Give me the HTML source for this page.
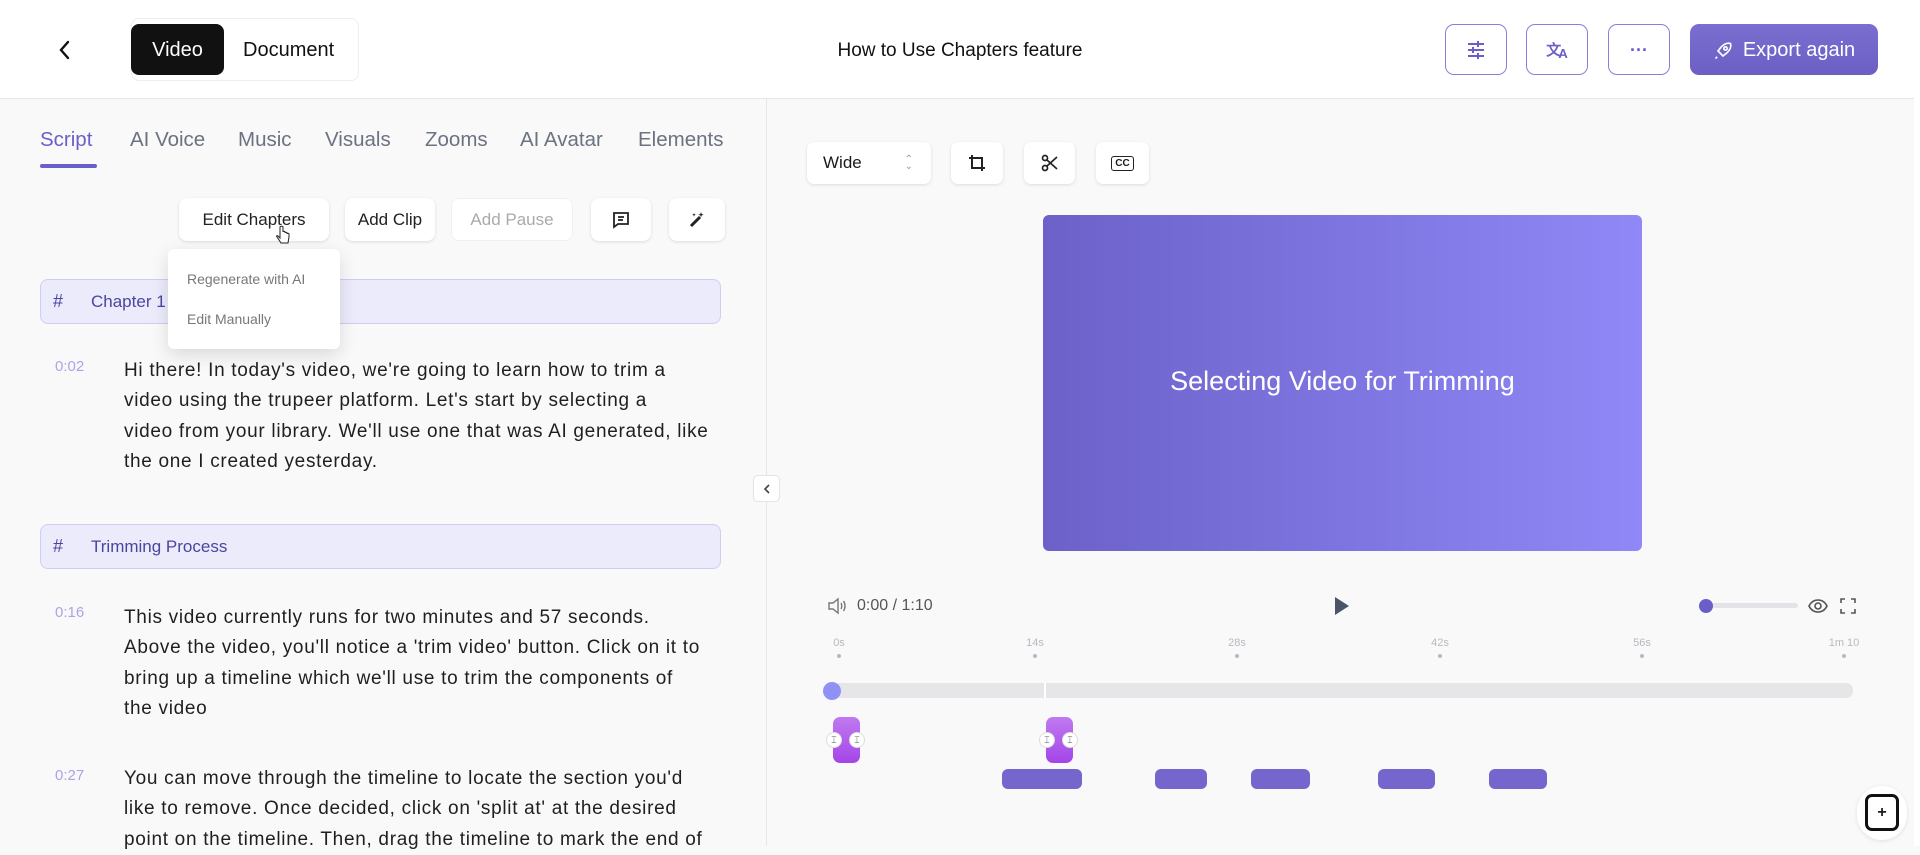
<!DOCTYPE html>
<html><head><meta charset="utf-8"><style>
*{box-sizing:border-box;margin:0;padding:0}
body{width:1920px;height:846px;overflow:hidden;background:#f9f9fa;font-family:"Liberation Sans",sans-serif;color:#1a1a1a;position:relative}
.a{position:absolute}
.hdr{left:0;top:0;width:1920px;height:99px;background:#fff;border-bottom:1px solid #e6e6ea}
.btn{position:absolute;border:1px solid #8a7fd8;border-radius:9px;background:#fff;display:flex;align-items:center;justify-content:center}
.tab{position:absolute;top:128px;font-size:20.5px;color:#6b7280}
.tb{position:absolute;top:198px;height:43px;background:#fff;border-radius:8px;box-shadow:0 1px 3px rgba(0,0,0,.12);display:flex;align-items:center;justify-content:center;font-size:17px;color:#222}
.chap{position:absolute;left:40px;width:681px;height:45px;background:#ebebfb;border:1px solid #cfcdf4;border-radius:8px;font-size:17px;color:#4b45a0;display:flex;align-items:center}
.chap b{font-weight:normal;margin:0 0 0 12px;width:38px;font-size:18px}
.ts{position:absolute;left:55px;font-size:15px;color:#a9a5e6}
.p{position:absolute;left:124px;white-space:nowrap;font-size:19px;letter-spacing:0.7px;line-height:30.3px;color:#1f1f1f}
.ib{position:absolute;top:142px;height:42px;background:#fff;border-radius:7px;box-shadow:0 1px 3px rgba(0,0,0,.12);display:flex;align-items:center;justify-content:center}
.tk{position:absolute;top:637px;font-size:11px;color:#b8b8c0;transform:translateX(-50%)}
.dot{position:absolute;top:654px;width:4px;height:4px;border-radius:2px;background:#b8b8c0}
.bar{position:absolute;top:769px;height:20px;border-radius:6px;background:#7466cc}
.clip{position:absolute;top:717px;width:27px;height:46px;border-radius:7px;background:linear-gradient(#c07af0,#a445e8)}
.h{position:absolute;top:732px;width:16px;height:16px;border-radius:8px;background:#fff;border:1px solid #ddd;font-size:9px;text-align:center;line-height:14px;color:#555}
</style></head><body>
<div class="a hdr"></div>
<svg class="a" style="left:58px;top:40px" width="14" height="20" viewBox="0 0 14 20"><path d="M10 2 L3 10 L10 18" stroke="#111" stroke-width="2.4" fill="none" stroke-linecap="round"/></svg>
<div class="a" style="left:131px;top:18px;width:228px;height:63px;border:1px solid #eee;border-radius:8px;background:#fff"></div>
<div class="a" style="left:131px;top:24px;width:93px;height:51px;background:#111;border-radius:8px;color:#fff;font-size:20px;display:flex;align-items:center;justify-content:center;padding-top:2px">Video</div>
<div class="a" style="left:243px;top:39px;font-size:20px;color:#111">Document</div>
<div class="a" style="left:760px;width:400px;top:40px;text-align:center;font-size:19px;color:#111">How to Use Chapters feature</div>
<div class="btn" style="left:1445px;top:24px;width:62px;height:51px"><svg width="20" height="18" viewBox="0 0 20 18" stroke="#6a5fc8" stroke-width="2"><path d="M2 3h16M2 9h16M2 15h16"/><path d="M12 0v6M7 6v6M12 12v6"/></svg></div>
<div class="btn" style="left:1526px;top:24px;width:62px;height:51px;color:#6a5fc8;font-size:15px;font-weight:bold">文<span style="font-size:13px;margin-left:-3px;margin-top:8px">A</span></div>
<div class="btn" style="left:1608px;top:24px;width:62px;height:51px;color:#6a5fc8;font-size:18px;font-weight:bold;letter-spacing:1px;padding-bottom:8px">...</div>
<div class="a" style="left:1690px;top:24px;width:188px;height:51px;border-radius:9px;background:linear-gradient(#7a6fd0,#6b5fc4);color:#fff;font-size:20px;display:flex;align-items:center;justify-content:center;gap:10px;padding-top:2px"><svg width="20" height="20" viewBox="0 0 24 24" fill="none" stroke="#fff" stroke-width="2"><path d="M5 19l-2 2M9 15l-3-3 4-5c4-4 8-5 11-4 1 3 0 7-4 11l-5 4z"/><circle cx="15" cy="9" r="2"/></svg>Export again</div>
<div class="a" style="left:1914px;top:0;width:6px;height:846px;background:#fff"></div>
<div class="a" style="left:766px;top:99px;width:1px;height:747px;background:#e6e6ea"></div>

<div class="tab" style="left:40px;color:#6a5fc8">Script</div>
<div class="a" style="left:40px;top:164px;width:57px;height:4px;border-radius:2px;background:#6a5fc8"></div>
<div class="tab" style="left:130px">AI Voice</div>
<div class="tab" style="left:238px">Music</div>
<div class="tab" style="left:325px">Visuals</div>
<div class="tab" style="left:425px">Zooms</div>
<div class="tab" style="left:520px">AI Avatar</div>
<div class="tab" style="left:638px">Elements</div>

<div class="tb" style="left:179px;width:150px">Edit Chapters</div>
<div class="tb" style="left:345px;width:90px">Add Clip</div>
<div class="tb" style="left:451px;width:122px;color:#aaa;box-shadow:none;border:1px solid #f0f0f0">Add Pause</div>
<div class="tb" style="left:591px;width:60px"><svg width="18" height="18" viewBox="0 0 18 18" fill="none" stroke="#222" stroke-width="1.8"><path d="M2 2h14v11H6l-4 3z"/><path d="M6 6h6M6 9h5"/></svg></div>
<div class="tb" style="left:669px;width:56px"><svg width="18" height="18" viewBox="0 0 18 18"><path d="M3 15L12 6" stroke="#222" stroke-width="3"/><path d="M13 1l.7 2 2 .7-2 .7-.7 2-.7-2-2-.7 2-.7zM6 2l.5 1.3 1.3.5-1.3.5L6 5.6l-.5-1.3-1.3-.5 1.3-.5z" fill="#222"/></svg></div>

<div class="chap" style="top:279px"><b>#</b>Chapter 1</div>
<div class="a" style="left:168px;top:249px;width:172px;height:100px;background:#fff;border-radius:6px;box-shadow:0 6px 18px rgba(0,0,0,.13)"></div>
<div class="a" style="left:187px;top:271px;font-size:14px;color:#777">Regenerate with AI</div>
<div class="a" style="left:187px;top:311px;font-size:14px;color:#777">Edit Manually</div>
<svg class="a" style="left:275px;top:225px" width="16" height="22" viewBox="0 0 16 22"><path d="M5 2v11l-2-2c-1-1-2 0-1 1l4 6h7l1-6V9c0-1-2-1-2 0V8c0-1-2-1-2 0V7c0-1-2-1-2 0V2c0-1-3-1-3 0z" fill="#fff" stroke="#222" stroke-width="1"/></svg>

<div class="ts" style="top:358px">0:02</div>
<div class="p" style="top:356px">Hi there! In today's video, we're going to learn how to trim a<br>video using the trupeer platform. Let's start by selecting a<br>video from your library. We'll use one that was AI generated, like<br>the one I created yesterday.</div>
<div class="chap" style="top:524px"><b>#</b>Trimming Process</div>
<div class="ts" style="top:604px">0:16</div>
<div class="p" style="top:603px">This video currently runs for two minutes and 57 seconds.<br>Above the video, you'll notice a 'trim video' button. Click on it to<br>bring up a timeline which we'll use to trim the components of<br>the video</div>
<div class="ts" style="top:767px">0:27</div>
<div class="p" style="top:764px">You can move through the timeline to locate the section you'd<br>like to remove. Once decided, click on 'split at' at the desired<br>point on the timeline. Then, drag the timeline to mark the end of</div>

<div class="a" style="left:753px;top:475px;width:27px;height:27px;background:#fff;border:1px solid #e3e3e8;border-radius:5px;display:flex;align-items:center;justify-content:center"><svg width="8" height="10" viewBox="0 0 8 10"><path d="M6 1L2 5l4 4" stroke="#444" stroke-width="1.6" fill="none"/></svg></div>

<div class="ib" style="left:807px;width:124px;justify-content:flex-start;padding-left:16px;font-size:17px">Wide<span style="position:absolute;right:18px;font-size:10px;color:#999;line-height:7px">⌃<br>⌄</span></div>
<div class="ib" style="left:951px;width:52px"><svg width="18" height="18" viewBox="0 0 18 18" fill="none" stroke="#222" stroke-width="2"><path d="M4 1v13h13M1 4h13v13"/></svg></div>
<div class="ib" style="left:1024px;width:51px"><svg width="18" height="18" viewBox="0 0 18 18" fill="none" stroke="#222" stroke-width="1.7"><circle cx="4" cy="4" r="2.5"/><circle cx="4" cy="14" r="2.5"/><path d="M6 6l10 9M6 12L16 3"/></svg></div>
<div class="ib" style="left:1096px;width:53px"><div style="border:1.6px solid #222;border-radius:3px;font-size:10px;font-weight:bold;padding:1px 3px">CC</div></div>

<div class="a" style="left:1043px;top:215px;width:599px;height:336px;border-radius:6px;background:linear-gradient(90deg,#6c61c9,#8f88f6);color:#fff;font-size:27px;display:flex;align-items:center;justify-content:center;padding-bottom:4px">Selecting Video for Trimming</div>

<svg class="a" style="left:827px;top:597px" width="20" height="18" viewBox="0 0 20 18" fill="none" stroke="#777" stroke-width="1.4"><path d="M2 6h4l5-4v14l-5-4H2z"/><path d="M14 6c1 1.5 1 4.5 0 6M16.5 4c2 3 2 7 0 10"/></svg>
<div class="a" style="left:857px;top:597px;font-size:16px;color:#555">0:00 / 1:10</div>
<svg class="a" style="left:1334px;top:596px" width="16" height="20" viewBox="0 0 16 20"><path d="M1 1l14 9-14 9z" fill="#4a5568"/></svg>
<div class="a" style="left:1705px;top:603px;width:93px;height:5px;border-radius:3px;background:#e4e4e8"></div>
<div class="a" style="left:1699px;top:599px;width:14px;height:14px;border-radius:7px;background:#6a5fc8"></div>
<svg class="a" style="left:1808px;top:597px" width="20" height="18" viewBox="0 0 20 18" fill="none" stroke="#555" stroke-width="1.6"><path d="M1 9c4-8 14-8 18 0-4 8-14 8-18 0z"/><circle cx="10" cy="9" r="3"/></svg>
<svg class="a" style="left:1840px;top:598px" width="16" height="16" viewBox="0 0 16 16" fill="none" stroke="#555" stroke-width="1.6"><path d="M1 5V1h4M11 1h4v4M15 11v4h-4M5 15H1v-4"/></svg>

<div class="tk" style="left:839px">0s</div><div class="tk" style="left:1035px">14s</div><div class="tk" style="left:1237px">28s</div><div class="tk" style="left:1440px">42s</div><div class="tk" style="left:1642px">56s</div><div class="tk" style="left:1844px">1m 10</div>
<div class="dot" style="left:837px"></div><div class="dot" style="left:1033px"></div><div class="dot" style="left:1235px"></div><div class="dot" style="left:1438px"></div><div class="dot" style="left:1640px"></div><div class="dot" style="left:1842px"></div>
<div class="a" style="left:833px;top:683px;width:1020px;height:15px;border-radius:7px;background:#e6e6e9"></div>
<div class="a" style="left:1044px;top:683px;width:2px;height:15px;background:#fff"></div>
<div class="a" style="left:823px;top:682px;width:18px;height:18px;border-radius:9px;background:#8f92f4"></div>

<div class="clip" style="left:833px"></div><div class="h" style="left:826px">⌶</div><div class="h" style="left:849px">⌶</div>
<div class="clip" style="left:1046px"></div><div class="h" style="left:1039px">⌶</div><div class="h" style="left:1062px">⌶</div>
<div class="bar" style="left:1002px;width:80px"></div>
<div class="bar" style="left:1155px;width:52px"></div>
<div class="bar" style="left:1251px;width:59px"></div>
<div class="bar" style="left:1378px;width:57px"></div>
<div class="bar" style="left:1489px;width:58px"></div>

<div class="a" style="left:1857px;top:786px;width:50px;height:54px;border-radius:25px;background:#fff;box-shadow:0 1px 4px rgba(0,0,0,.1)"></div>
<div class="a" style="left:1865px;top:794px;width:34px;height:37px;border:3px solid #111;border-radius:7px;display:flex;align-items:center;justify-content:center;font-size:16px;font-weight:bold">+</div>
</body></html>
